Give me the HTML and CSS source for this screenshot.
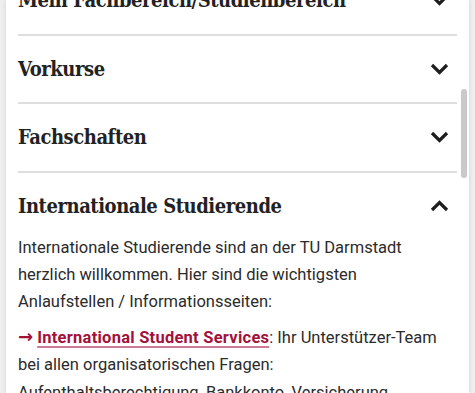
FILE: index.html
```html
<!DOCTYPE html>
<html lang="de">
<head>
<meta charset="utf-8">
<link rel="stylesheet" href="styles.css">
</head>
<body>
<div class="card">
  <div class="list">
    <div class="item">
      <div class="item-head"><h3 class="item-title">Mein Fachbereich/Studienbereich</h3><svg class="chev" viewBox="0 0 19 12"><path d="M2 2l7.5 7.5 7.5-7.5"/></svg></div>
    </div>
    <div class="item">
      <div class="item-head"><h3 class="item-title">Vorkurse</h3><svg class="chev" viewBox="0 0 19 12"><path d="M2 2l7.5 7.5 7.5-7.5"/></svg></div>
    </div>
    <div class="item">
      <div class="item-head"><h3 class="item-title">Fachschaften</h3><svg class="chev" viewBox="0 0 19 12"><path d="M2 2l7.5 7.5 7.5-7.5"/></svg></div>
    </div>
    <div class="item item-open">
      <div class="item-head item-head-open"><h3 class="item-title">Internationale Studierende</h3><svg class="chev" viewBox="0 0 19 12"><path d="M2 10l7.5-7.5 7.5 7.5"/></svg></div>
      <div class="panel">
        <p class="para">Internationale Studierende sind an der TU Darmstadt herzlich willkommen. Hier sind die wichtigsten Anlaufstellen / Informationsseiten:</p>
        <p class="para"><span class="arrow">→</span> <a class="link" href="#">International Student Services</a>: Ihr Unterstützer-Team bei allen organisatorischen Fragen: Aufenthaltsberechtigung, Bankkonto, Versicherung, Wohnungssuche und vieles mehr.</p>
      </div>
    </div>
  </div>
  <div class="scrollbar"></div>
</div>
</body>
</html>
```
FILE: styles.css
```css
html, body {
  margin: 0;
  padding: 0;
  height: 100%;
  overflow: hidden;
}
body {
  background: #eeeeee;
}
.card {
  position: relative;
  margin-left: 6px;
  width: 463px;
  height: 393px;
  background: #ffffff;
  box-shadow: 0 0 4px rgba(0,0,0,0.12);
  overflow: hidden;
  box-sizing: border-box;
  padding: 0 12px;
}
.list {
  margin-top: -33px;
}
.item {
  border-bottom: 2px solid #dedede;
}
.item-open {
  border-bottom: none;
}
.item-head {
  height: 66.5px;
  display: flex;
  align-items: center;
  justify-content: space-between;
}
.item-head-open {
  height: 61px;
  padding-top: 5px;
  box-sizing: border-box;
}
.item-title {
  margin: 0;
  font-family: "DejaVu Serif Condensed", "DejaVu Serif", serif;
  font-weight: bold;
  font-size: 20px;
  color: #222222;
  letter-spacing: -0.45px;
}
.chev {
  width: 19px;
  height: 12px;
  margin-right: 8px;
  fill: none;
  stroke: #1e1e1e;
  stroke-width: 3.2;
}
.panel {
  font-family: Roboto, "Noto Sans", sans-serif;
  font-size: 16.5px;
  line-height: 27.2px;
  color: #2b2b2b;
}
.para {
  margin: 0 0 8px 0;
}
.arrow {
  font-family: "DejaVu Sans", sans-serif;
  color: #a3113a;
  font-weight: bold;
  font-size: 18px;
}
.link {
  color: #a3113a;
  font-weight: bold;
  letter-spacing: 0.25px;
  text-decoration: underline;
  text-decoration-color: rgba(163,17,58,0.55);
  text-decoration-thickness: 2px;
  text-underline-offset: 3px;
}
.scrollbar {
  position: absolute;
  left: 455px;
  top: 89px;
  width: 6px;
  height: 89px;
  border-radius: 3px;
  background: #c9c9c9;
}
```
